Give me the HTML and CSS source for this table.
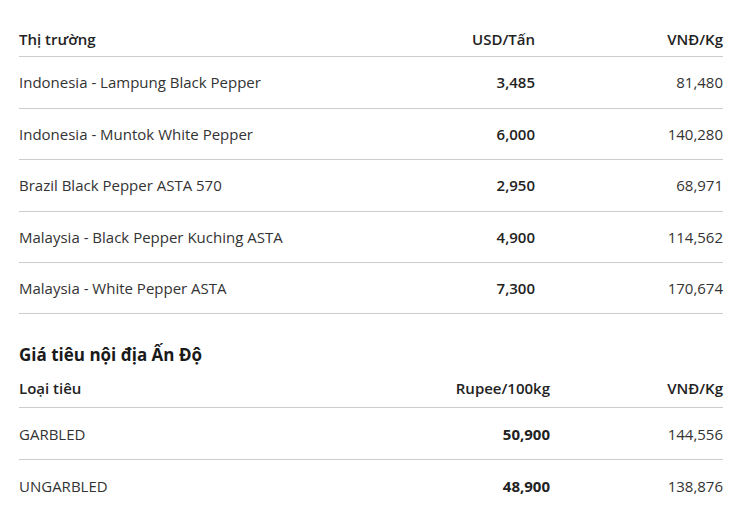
FILE: index.html
```html
<!DOCTYPE html>
<html lang="vi">
<head>
<meta charset="utf-8">
<link rel="stylesheet" href="styles.css">
</head>
<body>
<div class="page">
  <table class="price t1">
    <thead>
      <tr><th class="name">Thị trường</th><th class="num">USD/Tấn</th><th class="num last">VNĐ/Kg</th></tr>
    </thead>
    <tbody>
      <tr><td class="name">Indonesia - Lampung Black Pepper</td><td class="num strong">3,485</td><td class="num last">81,480</td></tr>
      <tr><td class="name">Indonesia - Muntok White Pepper</td><td class="num strong">6,000</td><td class="num last">140,280</td></tr>
      <tr><td class="name">Brazil Black Pepper ASTA 570</td><td class="num strong">2,950</td><td class="num last">68,971</td></tr>
      <tr><td class="name">Malaysia - Black Pepper Kuching ASTA</td><td class="num strong">4,900</td><td class="num last">114,562</td></tr>
      <tr><td class="name">Malaysia - White Pepper ASTA</td><td class="num strong">7,300</td><td class="num last">170,674</td></tr>
    </tbody>
  </table>

  <h2 class="section-title">Giá tiêu nội địa Ấn Độ</h2>

  <table class="price t2">
    <thead>
      <tr><th class="name">Loại tiêu</th><th class="num">Rupee/100kg</th><th class="num last">VNĐ/Kg</th></tr>
    </thead>
    <tbody>
      <tr><td class="name">GARBLED</td><td class="num strong">50,900</td><td class="num last">144,556</td></tr>
      <tr class="noline"><td class="name">UNGARBLED</td><td class="num strong">48,900</td><td class="num last">138,876</td></tr>
    </tbody>
  </table>
</div>
</body>
</html>
```

FILE: styles.css
```css
html, body {
  margin: 0;
  padding: 0;
  background: #ffffff;
}

body {
  font-family: "Open Sans", "Noto Sans", "Liberation Sans", sans-serif;
  font-size: 15px;
  color: #333333;
}

.page {
  width: 704px;
  padding: 29px 0 0 19px;
}

.price {
  width: 704px;
  border-collapse: collapse;
  table-layout: fixed;
}

.price th,
.price td {
  padding: 0;
  line-height: 20.4px;
  text-align: left;
  white-space: nowrap;
}

.price th {
  font-weight: 600;
  color: #222222;
  padding-bottom: 7px;
  border-bottom: 1px solid #cccccc;
}

.price td {
  padding: 15px 0 15px;
  border-bottom: 1px solid #cccccc;
  color: #333333;
}

.price tr.noline td {
  border-bottom: none;
}

.price .num {
  text-align: right;
}

.price .strong {
  font-weight: 600;
  color: #222222;
}

.t2 .strong {
  font-weight: 700;
}

.t1 .last { width: 188px; }
.t2 .last { width: 173px; }

.section-title {
  margin: 29px 0 11px;
  font-size: 17px;
  line-height: 24px;
  font-weight: 700;
  color: #1a1a1a;
}

.t2 th {
  padding-bottom: 8px;
}

.t2 td {
  padding-top: 16px;
}
```
